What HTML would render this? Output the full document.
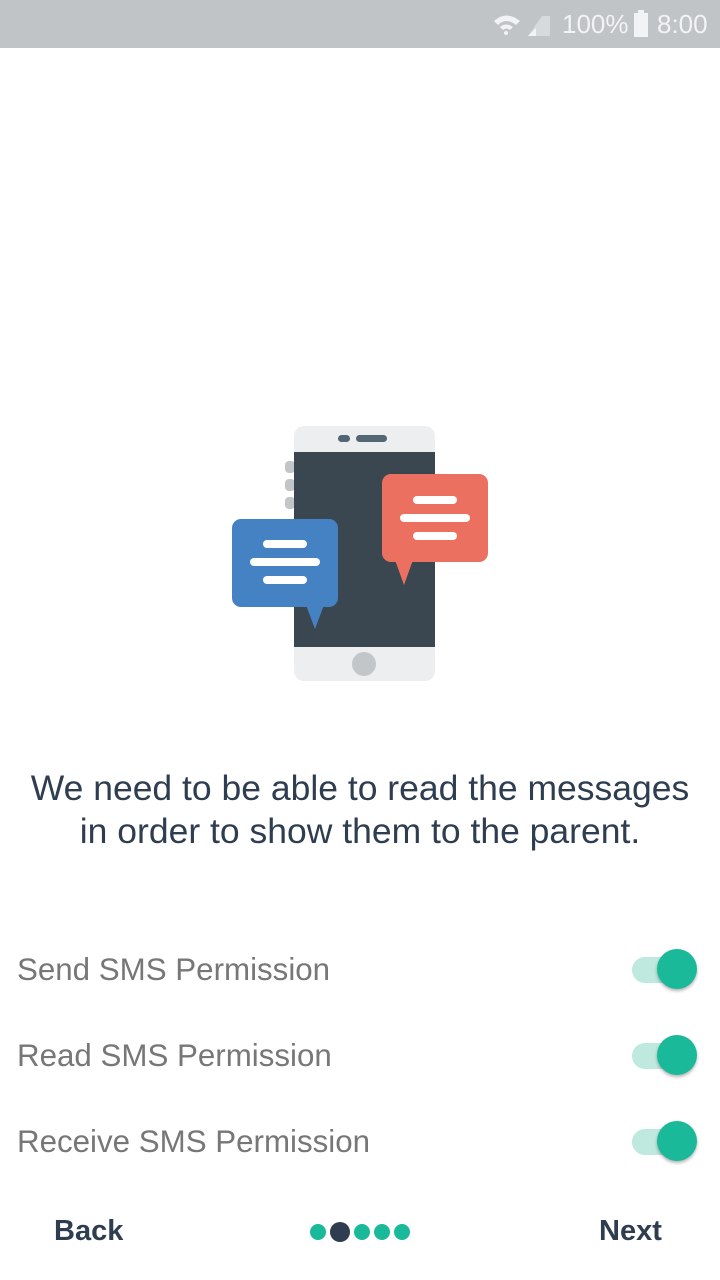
<!DOCTYPE html>
<html><head><meta charset="utf-8"><style>
body{margin:0;width:720px;height:1280px;background:#fff;font-family:"Liberation Sans",sans-serif;position:relative;overflow:hidden}
.sb{position:absolute;left:0;top:0;width:720px;height:48px;background:#c0c4c7;color:#f2f3f4;font-size:26px}
.abs{position:absolute}
.msg{position:absolute;left:0;width:720px;top:767px;text-align:center;color:#2e3d4f;font-size:35.5px;line-height:43px}
.row{position:absolute;left:17px;color:#777;font-size:31.3px}
.track{position:absolute;left:632px;width:58px;height:26px;border-radius:13px;background:#bfe8df}
.thumb{position:absolute;left:657px;width:40px;height:40px;border-radius:50%;background:#1ab99a;box-shadow:0 2px 3px rgba(0,0,0,.3)}
.btn{position:absolute;top:1215px;font-size:29px;font-weight:bold;color:#2e3d4f}
.dot{position:absolute;width:16px;height:16px;border-radius:50%;background:#1ab99a;top:1224px}
</style></head><body>
<div class="sb">
<svg class="abs" style="left:492px;top:12px" width="60" height="26"><path d="M2 9 Q14 -2 28 9 L24 13 Q14 5 6 13Z M8 15 Q14 10 21 15 L18 18 Q14 15 11 18Z" fill="#f2f3f4"/><circle cx="14" cy="21" r="2" fill="#f2f3f4"/><path d="M50 4 L58 4 L58 24 L36 24Z" fill="#d7dadc"/><path d="M36 24 L44 16 L44 24Z" fill="#f2f3f4"/></svg>
<div class="abs" style="left:562px;top:9px">100%</div>
<div class="abs" style="left:634px;top:13px;width:14px;height:24px;background:#f2f3f4"></div>
<div class="abs" style="left:638px;top:10px;width:6px;height:4px;background:#f2f3f4"></div>
<div class="abs" style="left:657px;top:9px">8:00</div>
</div>
<svg class="abs" style="left:0;top:0" width="720" height="720">
<rect x="285" y="461" width="10" height="12" rx="4" fill="#c3c6c9"/>
<rect x="285" y="479" width="10" height="12" rx="4" fill="#c3c6c9"/>
<rect x="285" y="497" width="10" height="12" rx="4" fill="#c3c6c9"/>
<rect x="294" y="426" width="141" height="255" rx="10" fill="#eceeef"/>
<rect x="294" y="452" width="141" height="195" fill="#3a4650"/>
<rect x="338" y="435" width="12" height="7" rx="3.5" fill="#536674"/>
<rect x="356" y="435" width="31" height="7" rx="3.5" fill="#536674"/>
<circle cx="364" cy="664" r="12" fill="#c3c6c9"/>
<rect x="382" y="474" width="106" height="88" rx="9" fill="#ec7060"/>
<path d="M395 560 L413 560 L404 585Z" fill="#ec7060"/>
<rect x="413" y="496" width="44" height="8" rx="4" fill="#fff"/>
<rect x="400" y="514" width="70" height="8" rx="4" fill="#fff"/>
<rect x="413" y="532" width="44" height="8" rx="4" fill="#fff"/>
<rect x="232" y="519" width="106" height="88" rx="9" fill="#4582c4"/>
<path d="M306 605 L324 605 L315 629Z" fill="#4582c4"/>
<rect x="263" y="540" width="44" height="8" rx="4" fill="#fff"/>
<rect x="250" y="558" width="70" height="8" rx="4" fill="#fff"/>
<rect x="263" y="576" width="44" height="8" rx="4" fill="#fff"/>
</svg>
<div class="msg">We need to be able to read the messages<br>in order to show them to the parent.</div>
<div class="row" style="top:952px">Send SMS Permission</div>
<div class="track" style="top:957px"></div><div class="thumb" style="top:949px"></div>
<div class="row" style="top:1038px">Read SMS Permission</div>
<div class="track" style="top:1043px"></div><div class="thumb" style="top:1035px"></div>
<div class="row" style="top:1124px">Receive SMS Permission</div>
<div class="track" style="top:1129px"></div><div class="thumb" style="top:1121px"></div>
<div class="btn" style="left:54px">Back</div>
<div class="btn" style="left:599px">Next</div>
<div class="dot" style="left:310px"></div>
<div class="dot" style="left:330px;width:20px;height:20px;top:1222px;background:#2e3d4f"></div>
<div class="dot" style="left:354px"></div>
<div class="dot" style="left:374px"></div>
<div class="dot" style="left:394px"></div>
</body></html>
